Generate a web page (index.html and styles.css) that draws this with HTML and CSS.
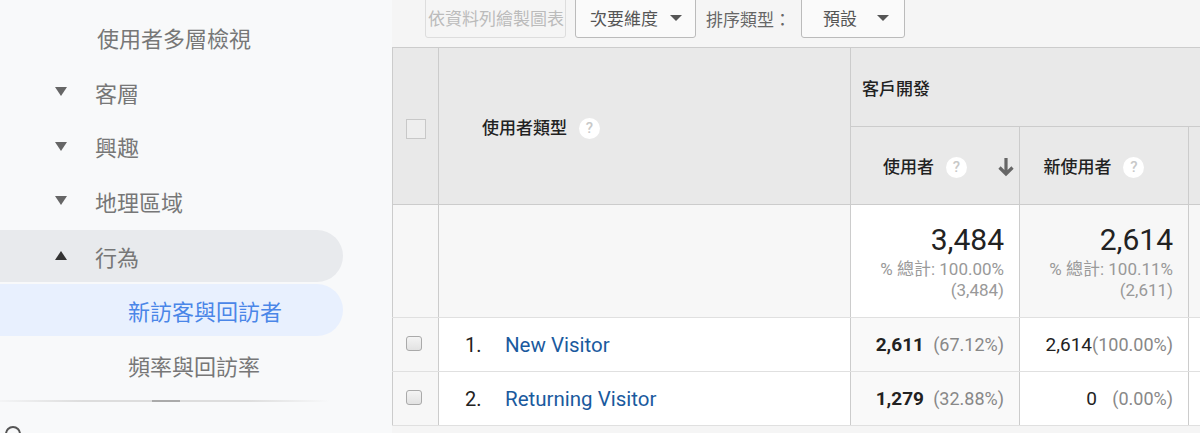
FILE: index.html
```html
<!DOCTYPE html>
<html>
<head>
    <meta charset="UTF-8">
    <title>新訪客與回訪者</title>
    <link rel="stylesheet" href="styles.css">
</head>
<body>
<div class="page">
    <aside class="sidebar">
        <ul class="nav">
            <li class="nav-item top"><span>使用者多層檢視</span></li>
            <li class="nav-item"><em class="caret"></em><span>客層</span></li>
            <li class="nav-item"><em class="caret"></em><span>興趣</span></li>
            <li class="nav-item"><em class="caret"></em><span>地理區域</span></li>
            <li class="nav-item open"><em class="caret up"></em><span>行為</span></li>
            <li class="nav-item sub active"><span>新訪客與回訪者</span></li>
            <li class="nav-item sub"><span>頻率與回訪率</span></li>
        </ul>
        <div class="divider"><i></i></div>
        <div class="foot-icon"></div>
    </aside>

    <main class="report">
        <div class="toolbar">
            <button class="btn disabled">依資料列繪製圖表</button>
            <button class="btn drop">次要維度 <em></em></button>
            <span class="label">排序類型：</span>
            <button class="btn drop short">預設 <em></em></button>
        </div>

        <table class="grid">
            <colgroup>
                <col class="c-check">
                <col class="c-dim">
                <col class="c-metric">
                <col class="c-metric">
                <col class="c-rest">
            </colgroup>
            <thead>
            <tr class="head-1">
                <th rowspan="2" class="check-cell"><span class="box"></span></th>
                <th rowspan="2" class="dim-head">使用者類型 <i class="help">?</i></th>
                <th colspan="3" class="group-head">客戶開發</th>
            </tr>
            <tr class="head-2">
                <th class="metric-head sorted">使用者 <i class="help">?</i>
                    <svg class="sort-arrow" width="18" height="20" viewBox="0 0 18 20">
                        <path d="M9 1v16M2.5 10.5l6.5 6.5 6.5-6.5" fill="none" stroke="#666" stroke-width="3.2"/>
                    </svg>
                </th>
                <th class="metric-head">新使用者 <i class="help">?</i></th>
                <th class="metric-head"></th>
            </tr>
            </thead>
            <tbody>
            <tr class="total">
                <td class="check-cell"></td>
                <td></td>
                <td class="num sorted">
                    <div class="big">3,484</div>
                    <div class="sub-total">% 總計: 100.00%<br>(3,484)</div>
                </td>
                <td class="num">
                    <div class="big">2,614</div>
                    <div class="sub-total">% 總計: 100.11%<br>(2,611)</div>
                </td>
                <td></td>
            </tr>
            <tr class="row">
                <td class="check-cell"><span class="tick"></span></td>
                <td class="dim"><span class="idx">1.</span><a href="#">New Visitor</a></td>
                <td class="num sorted"><b>2,611</b><span class="pct">(67.12%)</span></td>
                <td class="num">2,614<span class="pct">(100.00%)</span></td>
                <td></td>
            </tr>
            <tr class="row">
                <td class="check-cell"><span class="tick"></span></td>
                <td class="dim"><span class="idx">2.</span><a href="#">Returning Visitor</a></td>
                <td class="num sorted"><b>1,279</b><span class="pct">(32.88%)</span></td>
                <td class="num">0<span class="pct">(0.00%)</span></td>
                <td></td>
            </tr>
            </tbody>
        </table>
    </main>
</div>
</body>
</html>
```

FILE: styles.css
```css
html, body, div, ul, li, span, em, table, th, td {
    margin: 0;
    padding: 0;
    list-style: none;
}

body {
    width: 1200px;
    height: 433px;
    overflow: hidden;
    background: #fff;
    font-family: Roboto, "Noto Sans CJK TC", sans-serif;
}

.page {
    display: flex;
    height: 433px;
}

/* 左边导航 */
.sidebar {
    width: 392px;
    flex: none;
    background: #f8f9fa;
    padding-top: 11px;
    box-sizing: border-box;
    font-family: "Noto Sans CJK TC", sans-serif;
}

.nav-item {
    display: flex;
    align-items: center;
    width: 343px;
    height: 52px;
    margin-bottom: 2.67px;
    border-radius: 0 26px 26px 0;
    font-size: 22px;
    color: #777;
}

.nav-item.top span {
    margin-left: 97px;
}

.nav-item .caret {
    display: block;
    width: 0;
    height: 0;
    margin-left: 55px;
    margin-right: 28px;
    border-left: 6px solid transparent;
    border-right: 6px solid transparent;
    border-top: 9px solid #666;
}

.nav-item .caret.up {
    border-top: 0;
    border-bottom: 9px solid #333;
}

.nav-item.open {
    background: #e8eaed;
}

.nav-item.sub span {
    margin-left: 128px;
}

.nav-item.active {
    background: #e8f0fe;
    color: #4a86e8;
}

.divider {
    position: relative;
    width: 330px;
    height: 2px;
    margin-top: 9px;
    background: linear-gradient(to right, rgba(0, 0, 0, 0.02), #ddd 25%, #ddd 75%, rgba(0, 0, 0, 0));
}

.divider i {
    position: absolute;
    left: 152px;
    top: 0;
    width: 28px;
    height: 2px;
    background: #aaa;
}

.foot-icon {
    width: 12px;
    height: 12px;
    margin: 24px 0 0 5px;
    border: 2px solid #555;
    border-radius: 50%;
}

/* 右边报表 */
.report {
    flex: 1;
    overflow: hidden;
    background: #f5f5f5;
}

.toolbar {
    display: flex;
    align-items: flex-end;
    height: 47px;
    box-sizing: border-box;
    padding: 0 0 9px 33px;
    font-family: "Noto Sans CJK TC", sans-serif;
}

.btn {
    height: 41px;
    box-sizing: border-box;
    margin-right: 9px;
    padding: 0 10px 0 14px;
    border: 1px solid #bbb;
    border-radius: 3px;
    background: #fafafa;
    font-family: "Noto Sans CJK TC", sans-serif;
    font-size: 17px;
    color: #555;
    display: flex;
    align-items: center;
}

.btn.disabled {
    width: 141px;
    padding: 0 0 0 2px;
    border-color: #ddd;
    background: #f5f5f5;
    color: #bbb;
}

.btn.drop {
    width: 121px;
}

.btn.drop.short {
    width: 104px;
    padding-left: 21px;
}

.btn em {
    width: 0;
    height: 0;
    margin-left: 12px;
    border-left: 6px solid transparent;
    border-right: 6px solid transparent;
    border-top: 6px solid #555;
}

.btn.drop.short em {
    margin-left: 20px;
}

.label {
    margin: 0 10px 0 1px;
    font-size: 17px;
    color: #666;
    line-height: 38px;
}

.grid {
    border-collapse: collapse;
    table-layout: fixed;
    width: 960px;
    background: #fff;
}

.c-check { width: 46px; }
.c-dim { width: 412px; }
.c-metric { width: 169px; }
.c-rest { width: 164px; }

.grid th {
    background: #e9e9e9;
    border: 1px solid #ccc;
    font-family: "Noto Sans CJK TC", sans-serif;
    font-size: 17px;
    font-weight: 500;
    color: #222;
    text-align: left;
}

.head-1 { height: 79px; }
.head-2 { height: 78px; }

.check-cell {
    text-align: center;
    background: #f7f7f7;
}

.grid th.check-cell {
    background: #e9e9e9;
    text-align: center;
}

.box {
    display: inline-block;
    width: 20px;
    height: 20px;
    box-sizing: border-box;
    margin-left: 1px;
    border: 1px solid #c8c8c8;
    background: #eee;
    vertical-align: middle;
}

.dim-head {
    padding-left: 43px !important;
}

.group-head {
    padding-left: 11px !important;
}

.metric-head {
    position: relative;
    text-align: center !important;
    padding-right: 20px !important;
}

.help {
    display: inline-block;
    width: 21px;
    height: 21px;
    margin-left: 8px;
    border-radius: 50%;
    background: #fff;
    color: #c8c8c8;
    font-family: Roboto, sans-serif;
    font-size: 15px;
    font-style: normal;
    font-weight: 500;
    line-height: 21px;
    text-align: center;
    vertical-align: 1px;
}

.sort-arrow {
    position: absolute;
    right: 4px;
    top: 30px;
}

.grid td {
    border: 1px solid #e0e0e0;
    border-left-color: #ccc;
    border-right-color: #ccc;
}

.total td {
    height: 112px;
    background: #f7f7f7;
    border-top-color: #ccc;
}

.total td.sorted {
    background: #fff;
}

.num {
    text-align: right;
    padding-right: 15px !important;
    vertical-align: middle;
}

.big {
    font-size: 30px;
    color: #222;
    line-height: 36px;
}

.sub-total {
    margin-top: 1px;
    font-size: 17px;
    line-height: 21px;
    color: #999;
}

.row td {
    height: 53px;
    font-size: 19px;
    color: #222;
}

.row td.sorted {
    background: #f9f9f9;
}

.row td.check-cell {
    background: #f7f7f7;
}

.tick {
    display: inline-block;
    width: 16px;
    height: 15px;
    box-sizing: border-box;
    margin: -4px 0 0 -3px;
    border: 1px solid #aaa;
    border-radius: 3px;
    background: linear-gradient(#f4f4f4, #e2e2e2);
    vertical-align: middle;
}

.dim {
    padding-left: 26px !important;
}

.idx {
    display: inline-block;
    width: 40px;
    font-size: 20px;
}

.dim a {
    font-size: 20.5px;
    color: #1a5a9e;
    text-decoration: none;
}

.row b {
    font-weight: 700;
}

.pct {
    display: inline-block;
    min-width: 76px;
    font-size: 18px;
    text-align: right;
    color: #888;
}

.sorted .pct {
    margin-left: 4px;
}
```
